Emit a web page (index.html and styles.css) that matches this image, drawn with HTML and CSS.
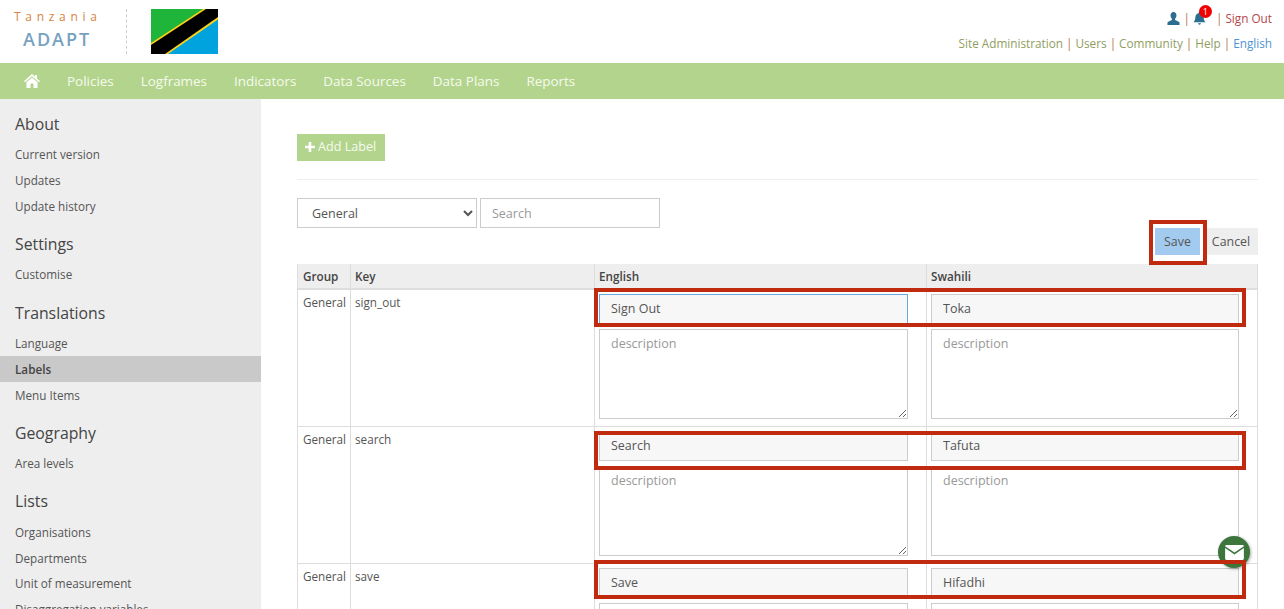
FILE: index.html
```html
<!DOCTYPE html>
<html lang="en">
<head>
    <meta charset="UTF-8">
    <title>Tanzania ADAPT - Labels</title>
    <link rel="stylesheet" href="styles.css">
</head>
<body>
    <header class="top">
        <div class="logo">
            <div class="logo-country">Tanzania</div>
            <div class="logo-name">ADAPT</div>
        </div>
        <div class="logo-divider"></div>
        <svg class="flag" viewBox="0 0 67 45" width="67" height="45">
            <rect width="67" height="45" fill="#1eb53a"/>
            <polygon points="67,0 67,45 0,45" fill="#00a3dd"/>
            <polygon points="0,34 52,0 67,0 67,10.500 17,45 0,45" fill="#fcd116"/>
            <polygon points="0,36 55,0 67,0 67,8 14,45 0,45" fill="#000"/>
        </svg>
        <div class="top-links">
            <div class="top-row">
                <svg class="top-icon" viewBox="0 0 14 14" width="13" height="13"><path fill="#2c6e91" d="M7 0c2 0 3.200 1.500 3.200 3.600 0 1.500-.6 2.900-1.500 3.700v1.300l4 1.900c.5.300.8.700.8 1.200V14H.500v-2.300c0-.5.300-.9.800-1.200l4-1.900V7.300C4.400 6.500 3.800 5.100 3.800 3.600 3.800 1.500 5 0 7 0z"/></svg>
                <span class="sep">|</span>
                <span class="bell">
                    <svg class="top-icon" viewBox="0 0 14 14" width="13" height="13"><path fill="#2c6e91" d="M7 0c.6 0 1 .4 1 1v.4c2.200.5 3.500 2.300 3.500 4.600 0 2.500.8 3.800 2 5H.500c1.200-1.200 2-2.500 2-5 0-2.300 1.300-4.100 3.500-4.600V1c0-.6.400-1 1-1zM5.500 12h3c0 .9-.6 1.600-1.500 1.600S5.500 12.900 5.500 12z"/></svg>
                    <span class="badge">1</span>
                </span>
                <span class="sep">|</span>
                <a class="signout">Sign Out</a>
            </div>
            <div class="top-row">
                <a>Site Administration</a><span class="sep">|</span>
                <a>Users</a><span class="sep">|</span>
                <a>Community</a><span class="sep">|</span>
                <a>Help</a><span class="sep">|</span>
                <a class="lang">English</a>
            </div>
        </div>
    </header>

    <nav class="menu">
        <svg class="home" viewBox="0 0 16 14" width="16" height="14"><path fill="#fff" d="M8 0l3 2.600V1h2v3.400l3 2.800-1 1.100L8 2.200 1 8.300 0 7.200zM8 3.400l5.500 4.800V14H9.500V9.500h-3V14H2.500V8.200z"/></svg>
        <a>Policies</a>
        <a>Logframes</a>
        <a>Indicators</a>
        <a>Data Sources</a>
        <a>Data Plans</a>
        <a>Reports</a>
    </nav>

    <div class="layout">
        <aside class="sidebar">
            <h3>About</h3>
            <a>Current version</a>
            <a>Updates</a>
            <a>Update history</a>
            <h3>Settings</h3>
            <a>Customise</a>
            <h3>Translations</h3>
            <a>Language</a>
            <a class="active">Labels</a>
            <a>Menu Items</a>
            <h3>Geography</h3>
            <a>Area levels</a>
            <h3>Lists</h3>
            <a>Organisations</a>
            <a>Departments</a>
            <a>Unit of measurement</a>
            <a>Disaggregation variables</a>
        </aside>

        <main class="content">
            <button class="add-btn">
                <svg viewBox="0 0 10 10" width="10" height="10"><path fill="#fff" d="M3.700 0h2.600v3.700H10v2.600H6.300V10H3.700V6.300H0V3.700h3.700z"/></svg>
                Add Label
            </button>
            <hr class="rule">
            <div class="filters">
                <select class="group-select"><option>General</option></select>
                <input class="search" type="text" placeholder="Search">
            </div>
            <div class="actions">
                <button class="save-btn">Save</button>
                <button class="cancel-btn">Cancel</button>
            </div>
            <table class="labels">
                <thead>
                    <tr>
                        <th class="col-group">Group</th>
                        <th class="col-key">Key</th>
                        <th class="col-lang">English</th>
                        <th>Swahili</th>
                    </tr>
                </thead>
                <tbody>
                    <tr>
                        <td>General</td>
                        <td>sign_out</td>
                        <td><input class="focused" type="text" value="Sign Out"><textarea placeholder="description"></textarea></td>
                        <td><input type="text" value="Toka"><textarea placeholder="description"></textarea></td>
                    </tr>
                    <tr>
                        <td>General</td>
                        <td>search</td>
                        <td><input type="text" value="Search"><textarea placeholder="description"></textarea></td>
                        <td><input type="text" value="Tafuta"><textarea placeholder="description"></textarea></td>
                    </tr>
                    <tr>
                        <td>General</td>
                        <td>save</td>
                        <td><input type="text" value="Save"><textarea placeholder="description"></textarea></td>
                        <td><input type="text" value="Hifadhi"><textarea placeholder="description"></textarea></td>
                    </tr>
                </tbody>
            </table>
        </main>
    </div>

    <!-- Things lying over the page: chat button and the red callouts -->
    <div class="chat">
        <svg viewBox="0 0 20 16" width="19" height="15"><path fill="#fff" d="M1.500 0h17c.8 0 1.400.5 1.500 1.200L10 8 0 1.200C.100.500.700 0 1.500 0zM0 3.200l10 6.800 10-6.800V14.500c0 .8-.7 1.500-1.500 1.500h-17C.700 16 0 15.300 0 14.500z"/></svg>
    </div>
    <div class="callout callout-save"></div>
    <div class="callout callout-row1"></div>
    <div class="callout callout-row2"></div>
    <div class="callout callout-row3"></div>
</body>
</html>
```

FILE: styles.css
```css
* {
    box-sizing: border-box;
}

html, body {
    height: 100%;
    overflow: hidden;
}

body {
    margin: 0;
    font-family: 'Open Sans', sans-serif;
    font-size: 11.700px;
    color: #555;
    background: #fff;
}

/* Header */
.top {
    height: 63px;
    display: flex;
    align-items: flex-start;
    padding-top: 9px;
}

.logo {
    width: 126px;
    padding-left: 14px;
}

.logo-country {
    font-size: 12px;
    line-height: 16px;
    letter-spacing: 4.700px;
    color: #d5843f;
}

.logo-name {
    font-size: 18px;
    font-weight: 600;
    line-height: 24px;
    letter-spacing: 2px;
    margin: 2px 0 0 9px;
    color: #76a2bf;
}

.logo-divider {
    height: 45px;
    border-left: 1px dashed #ccc;
}

.flag {
    margin-left: 24px;
}

.top-links {
    margin-left: auto;
    padding-right: 12px;
    text-align: right;
    font-size: 11.750px;
    color: #8f9e5f;
}

.top-row {
    display: flex;
    justify-content: flex-end;
    align-items: center;
    height: 18px;
    margin-bottom: 7px;
}

.top-icon {
    display: block;
}

.sep {
    margin: 0 3px;
    color: #b5734b;
}

.bell {
    position: relative;
    padding-right: 7px;
}

.badge {
    position: absolute;
    top: -7px;
    left: 6px;
    width: 13px;
    height: 13px;
    border-radius: 50%;
    background: #f00000;
    color: #fff;
    font-size: 9px;
    line-height: 13px;
    text-align: center;
}

.signout {
    color: #b5474b;
}

.lang {
    color: #4f93d1;
}

/* Green menu */
.menu {
    height: 36px;
    background: #b3d48c;
    display: flex;
    align-items: center;
    padding-left: 24px;
    font-size: 13.450px;
    color: #f6faef;
}

.menu a {
    margin-right: 27px;
}

.home {
    margin-right: 27px;
}

/* Sidebar and content */
.layout {
    display: flex;
    height: 510px;
}

.sidebar {
    width: 261px;
    flex: none;
    background: #eee;
    padding-top: 13px;
    overflow: hidden;
}

.sidebar h3 {
    margin: 0;
    padding: 0 15px;
    font-size: 15.800px;
    font-weight: 400;
    line-height: 24px;
    color: #444;
}

.sidebar a {
    display: block;
    height: 25.700px;
    line-height: 27.700px;
    padding: 0 15px;
    white-space: nowrap;
}

.sidebar h3 + a {
    margin-top: 5.450px;
}

.sidebar a + h3 {
    margin-top: 13.550px;
}

.sidebar a.active {
    background: #c9c9c9;
    color: #444;
    font-weight: 600;
}

.content {
    flex: 1;
    padding: 35px 26px 0 36px;
    overflow: hidden;
}

.add-btn {
    display: flex;
    align-items: center;
    gap: 3px;
    height: 27px;
    padding: 0 9px 2px 8px;
    border: 0;
    background: #b3d48c;
    color: #f6faef;
    font: inherit;
    font-size: 12.600px;
}

.rule {
    margin: 18px 0;
    border: 0;
    border-top: 1px solid #eee;
}

.filters {
    display: flex;
    gap: 3px;
}

.group-select,
.search {
    width: 180px;
    height: 30px;
    border: 1px solid #ccc;
    background: #fff;
    font: inherit;
    font-size: 12.500px;
    color: #555;
}

.group-select {
    padding-left: 10px;
}

.search {
    padding-left: 11px;
}

.search::placeholder,
textarea::placeholder {
    color: #999;
}

.actions {
    display: flex;
    justify-content: flex-end;
    height: 27px;
}

.save-btn,
.cancel-btn {
    border: 0;
    font: inherit;
    font-size: 12.400px;
    color: #555;
}

.save-btn {
    width: 45px;
    margin-right: 4px;
    background: #a3cbf0;
}

.cancel-btn {
    width: 54px;
    background: #eee;
}

/* Labels table */
.labels {
    width: 961px;
    margin-top: 9px;
    table-layout: fixed;
    border-collapse: collapse;
}

.labels th {
    height: 25px;
    padding: 0 4px 1px;
    text-align: left;
    font-weight: 600;
    background: #eee;
    color: #444;
    border: 1px solid #ddd;
    border-top: 0;
    border-bottom-width: 2px;
}

.labels th:first-child,
.labels td:first-child {
    padding-left: 5px;
}

.col-group {
    width: 53px;
}

.col-key {
    width: 244px;
}

.col-lang {
    width: 332px;
}

.labels td {
    padding: 4px;
    vertical-align: top;
    border: 1px solid #ddd;
}

.labels td input,
.labels td textarea {
    display: block;
    width: 309px;
    border: 1px solid #ccc;
    font: inherit;
    font-size: 12.500px;
    color: #555;
    padding: 0 11px;
}

.labels td:last-child input,
.labels td:last-child textarea {
    width: 308px;
}

.labels td input {
    height: 30px;
    padding-bottom: 2px;
    margin-bottom: 5px;
    background: #f7f7f7;
}

.labels td input.focused {
    border-color: #66a7e0;
}

.labels td textarea {
    height: 90px;
    padding-top: 5px;
    margin-bottom: 3px;
    background: #fff;
}

/* Overlays */
.chat {
    position: fixed;
    left: 1218px;
    top: 536px;
    width: 32px;
    height: 32px;
    border-radius: 50%;
    background: #3c763d;
    box-shadow: 1px 1px 3px rgba(0, 0, 0, 0.35);
    display: flex;
    align-items: center;
    justify-content: center;
}

.callout {
    position: fixed;
    border: 4px solid #c02a0e;
}

.callout-save {
    left: 1149px;
    top: 220px;
    width: 58px;
    height: 45px;
}

.callout-row1 {
    left: 594px;
    top: 288px;
    width: 652px;
    height: 39px;
}

.callout-row2 {
    left: 594px;
    top: 431px;
    width: 652px;
    height: 39px;
}

.callout-row3 {
    left: 594px;
    top: 560px;
    width: 652px;
    height: 39px;
}
```
